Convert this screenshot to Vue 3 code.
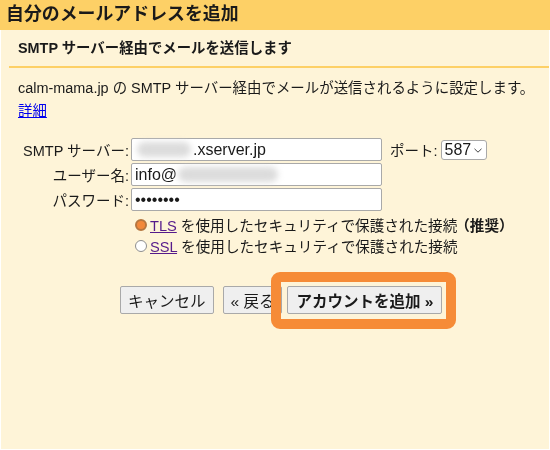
<script setup>
import { ref } from 'vue';

const server = ref('.xserver.jp');
const user = ref('info@');
const password = ref('password');
const security = ref('tls');
const port = ref('587');
</script>

<template>
  <div class="page">
    <h1 class="title">自分のメールアドレスを追加</h1>
    <div class="panel">
      <h2 class="subtitle">SMTP サーバー経由でメールを送信します</h2>
      <div class="intro">
        <div>calm-mama.jp の SMTP サーバー経由でメールが送信されるように設定します。</div>
        <a class="link" href="#">詳細</a>
      </div>

      <div class="form">
        <label class="label">SMTP サーバー:</label>
        <div class="field-row">
          <div class="field">
            <input v-model="server" class="input server-input" type="text" />
            <span class="blur-patch server-patch"></span>
          </div>
          <label class="port-label">ポート:</label>
          <div class="port">
            <select v-model="port" class="port-select">
              <option>587</option>
              <option>465</option>
            </select>
            <svg class="chevron" width="8" height="5" viewBox="0 0 8 5">
              <path d="M0.5 0.8 L4 4.2 L7.5 0.8" fill="none" stroke="#444" stroke-width="1" />
            </svg>
          </div>
        </div>

        <label class="label">ユーザー名:</label>
        <div class="field">
          <input v-model="user" class="input" type="text" />
          <span class="blur-patch user-patch"></span>
        </div>

        <label class="label">パスワード:</label>
        <div class="field">
          <input v-model="password" class="input password-input" type="password" />
        </div>
      </div>

      <div class="options">
        <label class="option">
          <input v-model="security" class="radio" type="radio" value="tls" />
          <span><a class="sec-link" href="#">TLS</a> を使用したセキュリティで保護された接続<b class="recommended">（推奨）</b></span>
        </label>
        <label class="option">
          <input v-model="security" class="radio" type="radio" value="ssl" />
          <span><a class="sec-link" href="#">SSL</a> を使用したセキュリティで保護された接続</span>
        </label>
      </div>

      <div class="buttons">
        <button class="btn">キャンセル</button>
        <button class="btn back">« 戻る</button>
        <div class="primary-wrap">
          <button class="btn primary">アカウントを追加 »</button>
          <span class="highlight"></span>
        </div>
      </div>
    </div>
  </div>
</template>

<style>
html,
body {
  margin: 0;
  background: #fff;
}
</style>

<style scoped>
.page {
  width: 550px;
  height: 450px;
  box-sizing: border-box;
  padding: 0 1px 1px 1px;
  display: flex;
  flex-direction: column;
  overflow: hidden;
  font-family: "Liberation Sans", "Noto Sans CJK JP", sans-serif;
  font-size: 14.5px;
  color: #1a1a1a;
  filter: blur(0.35px);
}

.title {
  margin: 0 -1px;
  height: 30px;
  line-height: 29px;
  padding-left: 6px;
  background: #fdd066;
  font-size: 17.9px;
  font-weight: bold;
  color: #1a1a1a;
}

.panel {
  flex: 1;
  background: #fef4d8;
  padding: 0 0 0 8px;
}

.subtitle {
  margin: 0;
  height: 36px;
  line-height: 37px;
  padding-left: 9px;
  border-bottom: 2px solid #fdd066;
  font-size: 14.4px;
  font-weight: bold;
  color: #1a1a1a;
}

.intro {
  padding: 9px 0 0 9px;
  line-height: 23px;
  font-size: 14.45px;
}

.link {
  color: #0000ee;
  text-decoration: underline;
}

.form {
  margin-top: 15px;
  display: grid;
  grid-template-columns: 120px 1fr;
  column-gap: 2px;
  row-gap: 2px;
  align-items: center;
}

.label {
  text-align: right;
  white-space: nowrap;
}

.field-row {
  display: flex;
  align-items: center;
}

.field {
  position: relative;
  width: 251px;
  height: 23px;
}

.input {
  width: 100%;
  height: 100%;
  box-sizing: border-box;
  border: 1px solid #a9a9a9;
  border-radius: 2px;
  background: #fff;
  padding: 0 3px;
  font: inherit;
  font-size: 16px;
  color: #1a1a1a;
  outline: none;
}

.server-input {
  padding-left: 61px;
}

.password-input {
  font-size: 16px;
}

.blur-patch {
  position: absolute;
  top: 4px;
  height: 15px;
  background: #dcdcdc;
  border-radius: 8px;
  filter: blur(3px);
}

.server-patch {
  left: 6px;
  width: 54px;
}

.user-patch {
  left: 47px;
  width: 100px;
}

.port-label {
  margin-left: 8px;
  white-space: nowrap;
}

.port {
  position: relative;
  margin-left: 3px;
  width: 46px;
  height: 20px;
}

.port-select {
  appearance: none;
  width: 100%;
  height: 100%;
  box-sizing: border-box;
  border: 1px solid #a9a9a9;
  border-radius: 3px;
  background: #fff;
  padding: 0 0 0 3px;
  font: inherit;
  font-size: 16px;
  color: #1a1a1a;
  outline: none;
}

.chevron {
  position: absolute;
  right: 5px;
  top: 8px;
  pointer-events: none;
}

.options {
  margin: 3px 0 0 125px;
  display: flex;
  flex-direction: column;
  font-size: 14.6px;
}

.option {
  display: flex;
  align-items: center;
  height: 21px;
  white-space: nowrap;
}

.radio {
  appearance: none;
  width: 12px;
  height: 12px;
  margin: 0 3px 0 1px;
  box-sizing: border-box;
  border: 1px solid #8e8e8e;
  border-radius: 50%;
  background: #fff;
}

.radio:checked {
  border: 2px solid #b5763f;
  background: #f2883a;
}

.sec-link {
  color: #551a8b;
  text-decoration: underline;
}

.recommended {
  font-size: 14.6px;
  font-weight: bold;
  margin-left: -2px;
}

.buttons {
  margin-top: 30px;
  margin-left: 111px;
  display: flex;
  align-items: center;
}

.btn {
  height: 28px;
  box-sizing: border-box;
  border: 1px solid #a9a9a9;
  border-radius: 2px;
  background: #efefef;
  padding: 0 7px;
  font: inherit;
  font-size: 15.5px;
  color: #1a1a1a;
  white-space: nowrap;
}

.back {
  margin-left: 9px;
}

.primary-wrap {
  position: relative;
  margin-left: 5px;
}

.primary {
  display: block;
  padding: 0 8px;
  font-weight: bold;
}

.highlight {
  position: absolute;
  left: -16px;
  right: -14px;
  top: -14px;
  bottom: -15px;
  border: 10px solid #f68b37;
  border-radius: 9px;
  pointer-events: none;
}
</style>
